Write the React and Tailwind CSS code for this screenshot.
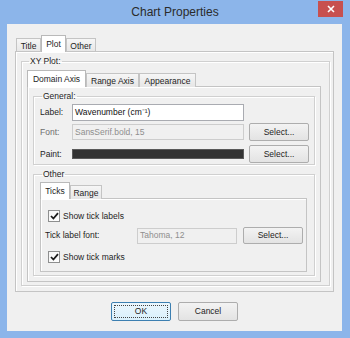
import React from "react";

const FONT = "font-['Liberation_Sans','Arial',sans-serif]";

function Tab({ label, selected, width }) {
  if (selected) {
    return (
      <div
        className={`relative z-10 h-[17px] ${width} flex items-start justify-center pt-[2px] bg-white border border-b-0 border-[#b9b9b9] text-[#1e1e1e]`}
      >
        {label}
      </div>
    );
  }
  return (
    <div
      className={`h-[14px] ${width} flex items-start justify-center pt-[1px] bg-gradient-to-b from-[#f6f6f6] to-[#e6e6e6] border border-b-0 border-[#c4c4c4] text-[#1e1e1e]`}
    >
      {label}
    </div>
  );
}

function TabRow({ children, pad = "pl-[1px]" }) {
  return <div className={`flex items-end h-[17px] -mb-[1px] ${pad}`}>{children}</div>;
}

function Panel({ className = "", children }) {
  return (
    <div
      className={`border border-[#c4c4c4] bg-[#f0f0f0] shadow-[inset_1px_1px_0_#ffffff] flex flex-col ${className}`}
    >
      {children}
    </div>
  );
}

function Group({ title, className = "", children }) {
  return (
    <fieldset
      className={`border border-[#d0d0d0] shadow-[inset_1px_1px_0_#ffffff,1px_1px_0_#ffffff] ${className}`}
    >
      <legend className="ml-[2px] px-[1px] leading-[11px] text-[#1e1e1e]">{title}</legend>
      {children}
    </fieldset>
  );
}

function Button({ children, className = "" }) {
  return (
    <div
      className={`flex items-center justify-center rounded-[2px] border border-[#adadad] bg-gradient-to-b from-[#f3f3f3] to-[#e3e3e3] text-[#1e1e1e] ${className}`}
    >
      {children}
    </div>
  );
}

function Check({ label }) {
  return (
    <div className="flex items-center ml-[3px] h-[12px]">
      <div className="w-[12px] h-[12px] border border-[#8e8f8f] bg-gradient-to-br from-[#f4f4f4] to-white flex items-center justify-center">
        <svg width="9" height="8" viewBox="0 0 9 8">
          <path d="M1 4 L3.4 6.5 L8 1.2" fill="none" stroke="#1a1a1a" strokeWidth="1.8" />
        </svg>
      </div>
      <span className="ml-[3px]">{label}</span>
    </div>
  );
}

export default function App() {
  return (
    <div className={`w-[350px] h-[338px] bg-[#8cb5ea] flex flex-col ${FONT} text-[8.5px] text-[#1e1e1e]`}>
      {/* title bar */}
      <div className="relative h-[24px] flex items-center justify-center">
        <span className="text-[12px] text-[#2b2b2b] -mt-[1px]">Chart Properties</span>
        <div className="absolute right-[7px] top-[1px] w-[25px] h-[16px] bg-[#c7504f] flex items-center justify-center">
          <svg width="8" height="8" viewBox="0 0 8 8">
            <path d="M1 1 L7 7 M7 1 L1 7" stroke="#ffffff" strokeWidth="1.6" />
          </svg>
        </div>
      </div>

      {/* client area */}
      <div className="ml-[7px] mr-[8px] h-[307px] bg-[#f0f0f0] flex flex-col px-[8px] pt-[11px]">
        <TabRow>
          <Tab label="Title" width="w-[25px]" />
          <Tab label="Plot" width="w-[25px]" selected />
          <Tab label="Other" width="w-[30px]" />
        </TabRow>
        <Panel className="h-[241px] pl-[5px] pr-[3px] pt-[4px] pb-[5px]">
          <Group title="XY Plot:" className="flex-1 min-h-0 pl-[5px] pr-[8px] pt-[3px] pb-[3px]">
            <TabRow pad="">
              <Tab label="Domain Axis" width="w-[59px]" selected />
              <Tab label="Range Axis" width="w-[53px]" />
              <Tab label="Appearance" width="w-[57px]" />
            </TabRow>
            <Panel className="h-[196px] px-[5px] pt-[4px]">
              <Group title="General:" className="pl-[6px] pr-[4px] pb-[1px]">
                <div className="flex items-center mt-[2px] h-[17px]">
                  <span className="w-[32px]">Label:</span>
                  <div className="w-[172px] h-[17px] bg-white border border-[#a9abb1] flex items-center pl-[2px] text-[#111]">
                    Wavenumber (cm⁻¹)
                  </div>
                </div>
                <div className="flex items-center mt-[2px] h-[18px]">
                  <span className="w-[32px] text-[#6d6d6d]">Font:</span>
                  <div className="w-[172px] h-[16px] bg-[#f0f0f0] border border-[#cdcdcd] flex items-center pl-[2px] text-[#8e8e8e]">
                    SansSerif.bold, 15
                  </div>
                  <Button className="ml-[5px] w-[60px] h-[18px]">Select...</Button>
                </div>
                <div className="flex items-center mt-[4px] h-[18px]">
                  <span className="w-[32px]">Paint:</span>
                  <div className="w-[172px] h-[10px] bg-[#333333] border border-[#5a5a5a]" />
                  <Button className="ml-[5px] w-[60px] h-[18px]">Select...</Button>
                </div>
              </Group>
              <Group title="Other" className="mt-[4px] pl-[6px] pr-[7px] pt-[2px] pb-[3px]">
                <TabRow pad="">
                  <Tab label="Ticks" width="w-[30px]" selected />
                  <Tab label="Range" width="w-[32px]" />
                </TabRow>
                <Panel className="h-[74px] pl-[4px] pt-[11px]">
                  <Check label="Show tick labels" />
                  <div className="flex items-center mt-[5px] h-[17px]">
                    <span className="w-[92px]">Tick label font:</span>
                    <div className="w-[100px] h-[16px] bg-[#f0f0f0] border border-[#cdcdcd] flex items-center pl-[2px] text-[#8e8e8e]">
                      Tahoma, 12
                    </div>
                    <Button className="ml-[6px] w-[60px] h-[17px]">Select...</Button>
                  </div>
                  <div className="mt-[7px]">
                    <Check label="Show tick marks" />
                  </div>
                </Panel>
              </Group>
            </Panel>
          </Group>
        </Panel>

        <div className="flex justify-center gap-[7px] mt-[10px]">
          <div className="w-[60px] h-[19px] rounded-[2px] border border-[#3c7fb1] bg-gradient-to-b from-[#eaf6fd] to-[#d9f0fc] p-[2px]">
            <div className="w-full h-full border border-dotted border-[#444] flex items-center justify-center">
              OK
            </div>
          </div>
          <Button className="w-[60px] h-[19px]">Cancel</Button>
        </div>
      </div>
    </div>
  );
}
